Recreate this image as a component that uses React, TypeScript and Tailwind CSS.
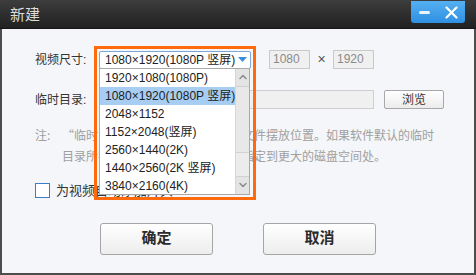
import { ChevronDown, ChevronUp } from 'lucide-react';

const FONT = { fontFamily: '"Liberation Sans", "Noto Sans CJK SC", sans-serif' };
const CJK = { fontFamily: '"Noto Sans CJK SC", sans-serif' };

const options = [
    '1920×1080(1080P)',
    '1080×1920(1080P 竖屏)',
    '2048×1152',
    '1152×2048(竖屏)',
    '2560×1440(2K)',
    '1440×2560(2K 竖屏)',
    '3840×2160(4K)',
];

const TitleBar = () => (
    <div className="h-[29px] shrink-0 flex items-center justify-between bg-gradient-to-b from-[#3d3d3d] to-[#212121] border-b border-[#151515]">
        <span className="pl-[10px] text-[15px] text-[#dcdcdc] leading-none">新建</span>
        <div className="self-start mt-[1px] mr-[11px] w-[54px] h-[22px] rounded-b-[3px] bg-gradient-to-b from-[#55b0f2] to-[#2e90e2] flex items-center">
            <div className="w-[27px] flex justify-center">
                <div className="w-[11px] h-[3px] rounded-full bg-white/90" />
            </div>
            <div className="w-[27px] flex justify-center">
                <svg width="13" height="13" viewBox="0 0 13 13">
                    <path d="M1.5 1.5 L11.5 11.5 M11.5 1.5 L1.5 11.5" stroke="white" strokeWidth="2.2" strokeLinecap="round" />
                </svg>
            </div>
        </div>
    </div>
);

const Dropdown = () => (
    <div className="relative w-[152px] h-[18px]">
        <div className="h-full rounded-[2px] border border-[#7ea6d6] bg-white flex items-center pl-[5px] pr-[3px] text-[12px] text-[#222]">
            <span className="flex-1 whitespace-nowrap">1080×1920(1080P 竖屏)</span>
            <svg width="9" height="6" viewBox="0 0 9 6"><path d="M0 0 H9 L4.5 5 Z" fill="#3a8ee0" /></svg>
        </div>

        {/* list */}
        <div className="absolute left-0 top-[17px] w-[151px] h-[127px] bg-white border border-[#a9a9a9] flex z-10">
            <div className="flex-1 flex flex-col">
                {options.map((o, i) => (
                    <div key={o} className={`h-[18px] shrink-0 flex items-center pl-[5px] text-[12px] text-[#222] whitespace-nowrap ${i === 1 ? 'bg-[#a7cdf2]' : ''}`}>
                        {o}
                    </div>
                ))}
            </div>
            <div className="w-[16px] flex flex-col bg-[#ececec] border-l border-[#d6d6d6]">
                <div className="h-[18px] flex items-center justify-center bg-[#e4e4e4] border-b border-[#cfcfcf]">
                    <ChevronUp size={12} strokeWidth={3} color="#8c8c8c" />
                </div>
                <div className="h-[66px] bg-[#e8e8e8] border-b border-[#d2d2d2]" />
                <div className="flex-1 border-b border-[#d2d2d2]" />
                <div className="h-[17px] flex items-center justify-center bg-[#e4e4e4]">
                    <ChevronDown size={12} strokeWidth={3} color="#8c8c8c" />
                </div>
            </div>
        </div>

        {/* highlight frame */}
        <div className="absolute -left-[5px] -top-[5px] w-[162px] h-[154px] border-[3px] border-[#ff6a0c] z-20 pointer-events-none" />
    </div>
);

const Btn = ({ label }: { label: string }) => (
    <button className="w-[113px] h-[32px] rounded-[3px] border border-[#a5a5a5] bg-gradient-to-b from-white to-[#ededed] text-[15px] font-bold text-[#2b2b2b]">
        {label}
    </button>
);

export default function App() {
    return (
        <div style={FONT} className="w-[476px] h-[275px] flex flex-col bg-[#f4f6f9] overflow-hidden">
            <TitleBar />
            <div className="flex-1 flex flex-col pl-[33px] border-l-2 border-r-2 border-b-2 border-[#4d4d4d] text-[12px] text-[#333]">
                {/* 视频尺寸 */}
                <div className="mt-[21px] h-[19px] flex items-center">
                    <span className="w-[64px]">视频尺寸:</span>
                    <Dropdown />
                    <div className="ml-[18px] w-[41px] h-[19px] border border-[#c9c9c9] bg-[#f0f0f0] text-[#8a8a8a] pl-[3px] leading-[17px]">1080</div>
                    <span className="w-[23px] text-center text-[14px] text-[#555]">×</span>
                    <div className="w-[41px] h-[19px] border border-[#c9c9c9] bg-[#f0f0f0] text-[#8a8a8a] pl-[3px] leading-[17px]">1920</div>
                </div>

                {/* 临时目录 */}
                <div className="mt-[21px] h-[19px] flex items-center">
                    <span className="w-[64px]">临时目录:</span>
                    <div className="w-[275px] h-[19px] border border-[#cfcfcf] bg-[#f0f0f0]" />
                    <button className="ml-[10px] w-[60px] h-[19px] rounded-[2px] border border-[#a8a8a8] bg-gradient-to-b from-white to-[#ececec] text-[12px] text-[#333]">
                        浏览
                    </button>
                </div>

                {/* note */}
                <div style={CJK} className="mt-[15px] flex text-[#a0a0a0] leading-[21px] whitespace-nowrap">
                    <span className="w-[27px]">注:</span>
                    <div>
                        “临时目录”是指视频处理的临时文件摆放位置。如果软件默认的临时<br />
                        目录所在的磁盘空间不足，可将其指定到更大的磁盘空间处。
                    </div>
                </div>

                {/* checkbox */}
                <div className="mt-[15px] flex items-center gap-[6px]">
                    <div className="w-[15px] h-[15px] border border-[#3b7ec8] bg-white" />
                    <span className="text-[13px] text-[#333]">为视频自动添加片头</span>
                </div>

                {/* buttons */}
                <div className="mt-[22px] flex gap-[50px] pl-[65px]">
                    <Btn label="确定" />
                    <Btn label="取消" />
                </div>
            </div>
        </div>
    );
}
